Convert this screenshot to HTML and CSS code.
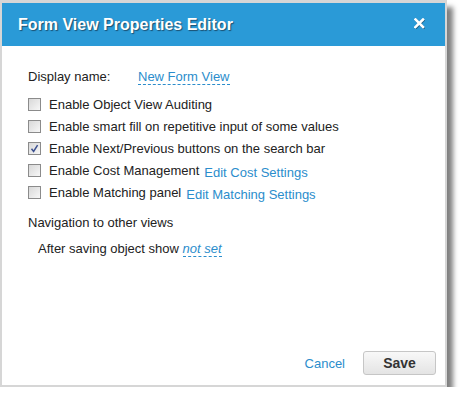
FILE: index.html
```html
<!DOCTYPE html>
<html>
<head>
<meta charset="utf-8">
<link rel="stylesheet" href="styles.css">
</head>
<body>
<div class="frame">
  <div class="dialog">
    <div class="header">
      <span class="title">Form View Properties Editor</span>
      <svg class="close" width="11" height="11" viewBox="0 0 11 11">
        <g stroke="#1d5f85" stroke-width="2.6" stroke-linecap="square" transform="translate(0.7,0.7)">
          <line x1="1.5" y1="1.5" x2="9" y2="9"/><line x1="9" y1="1.5" x2="1.5" y2="9"/>
        </g>
        <g stroke="#fff" stroke-width="2.6" stroke-linecap="square">
          <line x1="1.5" y1="1.5" x2="9" y2="9"/><line x1="9" y1="1.5" x2="1.5" y2="9"/>
        </g>
      </svg>
    </div>
    <div class="content">
      <div class="name-row">
        <span class="name-label">Display name:</span>
        <span class="editable">New Form View</span>
      </div>
      <div class="options">
        <div class="opt"><span class="cb"></span><span>Enable Object View Auditing</span></div>
        <div class="opt"><span class="cb"></span><span>Enable smart fill on repetitive input of some values</span></div>
        <div class="opt"><span class="cb checked"><svg width="9" height="9" viewBox="0 0 9 9"><path d="M1.5 4.8 L3.6 7.4 L7.6 1.2" fill="none" stroke="#3b4f8f" stroke-width="1.5"/></svg></span><span>Enable Next/Previous buttons on the search bar</span></div>
        <div class="opt"><span class="cb"></span><span>Enable Cost Management</span><span class="link low">Edit Cost Settings</span></div>
        <div class="opt"><span class="cb"></span><span>Enable Matching panel</span><span class="link low">Edit Matching Settings</span></div>
      </div>
      <div class="nav-title">Navigation to other views</div>
      <div class="nav-row">After saving object show <span class="editable italic">not set</span></div>
    </div>
    <div class="footer">
      <span class="link cancel">Cancel</span>
      <button class="save">Save</button>
    </div>
  </div>
</div>
</body>
</html>
```
FILE: styles.css
```css
html, body {
  margin: 0;
  padding: 0;
  background: #fff;
}
body {
  font-family: "Liberation Sans", Arial, sans-serif;
  font-size: 13px;
  color: #222;
}
.frame {
  width: 443px;
  height: 382px;
  border: 2px solid #d6d6d6;
  border-top-width: 3px;
  box-shadow: 6px 7px 5px rgba(0,0,0,0.5);
}
.dialog {
  height: 100%;
  background: #fff;
  display: flex;
  flex-direction: column;
}
.header {
  height: 43px;
  background: #2a9ad7;
  display: flex;
  align-items: center;
  justify-content: space-between;
  padding: 0 20px 0 16px;
}
.title {
  color: #fff;
  font-weight: bold;
  font-size: 16px;
  text-shadow: 1px 1px 1px #1b4f70;
}
.close {
  display: block;
  margin-top: -2px;
}
.content {
  flex: 1;
  padding: 23px 0 0 26px;
}
.name-row {
  display: flex;
  line-height: 16px;
}
.name-label {
  width: 110px;
}
.editable {
  color: #2b8dcc;
  border-bottom: 1px dashed #2b8dcc;
  line-height: 15px;
}
.italic {
  font-style: italic;
}
.options {
  margin-top: 8px;
}
.opt {
  display: flex;
  align-items: center;
  height: 22px;
}
.cb {
  width: 11px;
  height: 11px;
  border: 1px solid #8b8b8b;
  background: linear-gradient(135deg, #d8d8d8, #f7f7f7);
  margin-right: 8px;
  display: flex;
  align-items: center;
  justify-content: center;
  flex: none;
}
.cb svg {
  display: block;
}
.link {
  color: #2b8dcc;
}
.low {
  margin-left: 5px;
  padding-top: 4px;
}
.nav-title {
  margin-top: 12px;
  line-height: 16px;
}
.nav-row {
  margin-top: 10px;
  padding-left: 10px;
  line-height: 16px;
}
.footer {
  display: flex;
  justify-content: flex-end;
  align-items: center;
  padding: 0 9px 10px 0;
}
.cancel {
  margin-right: 18px;
}
.save {
  width: 73px;
  height: 24px;
  border: 1px solid #c6c6c6;
  border-radius: 3px;
  background: linear-gradient(#f8f8f8, #e4e4e4);
  font-family: "Liberation Sans", Arial, sans-serif;
  font-size: 14px;
  font-weight: bold;
  color: #333;
  padding: 0;
}
```
